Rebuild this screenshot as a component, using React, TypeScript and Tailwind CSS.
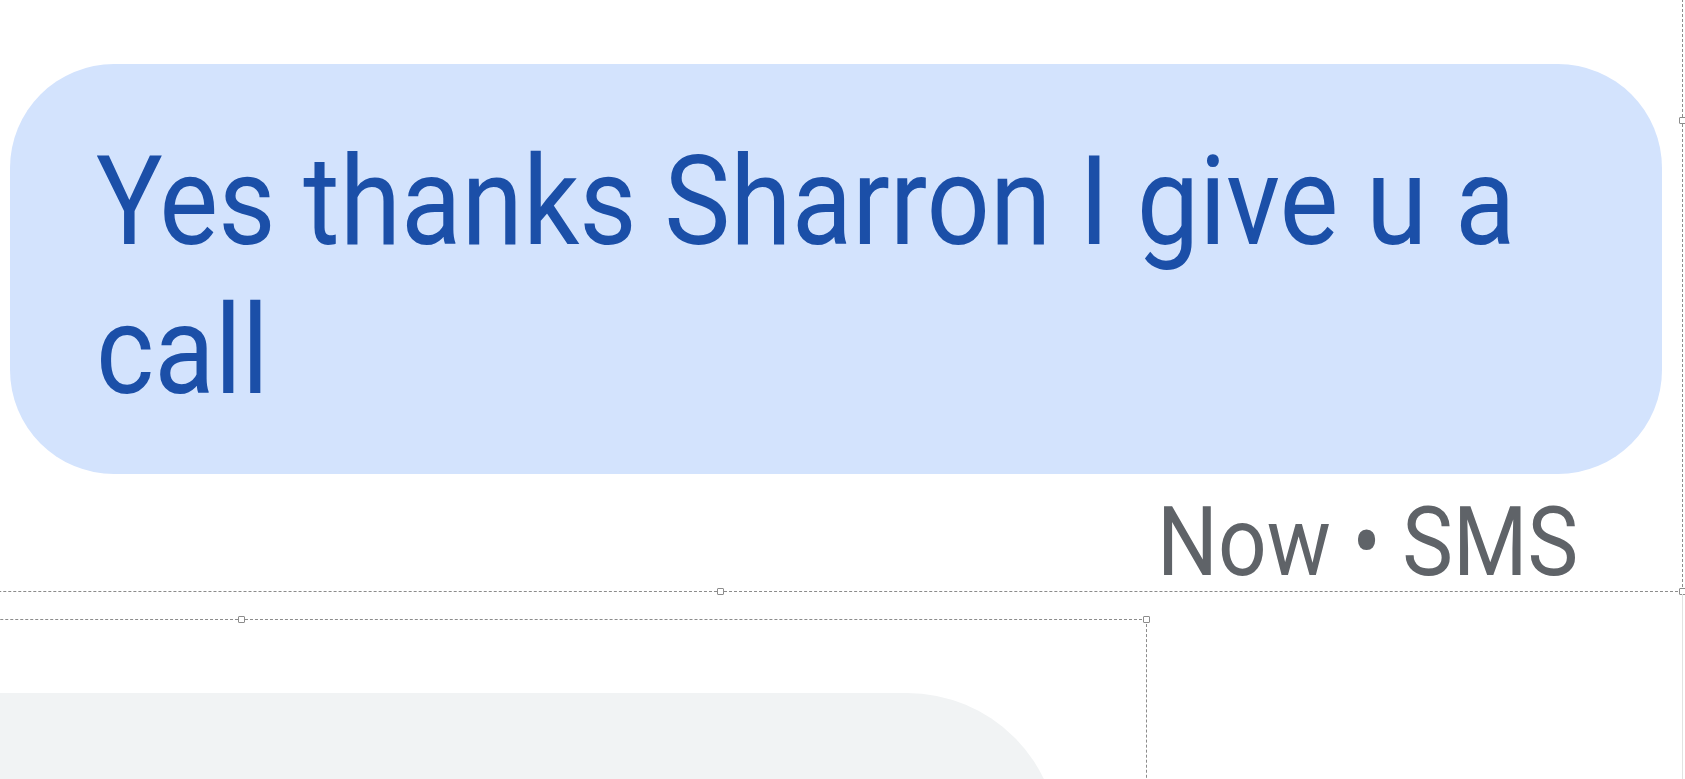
const font = { fontFamily: 'Roboto, "Noto Sans", sans-serif' };

function Handle({ className }: { className: string }) {
  return (
    <span
      className={`absolute h-[7px] w-[7px] rounded-[1px] border border-[#8c8c8c] bg-white ${className}`}
    />
  );
}

export default function App() {
  return (
    <div className="relative h-[779px] w-full overflow-hidden bg-white" style={font}>
      {/* message thread */}
      <div className="flex flex-col">
        <div className="ml-[10px] mt-[64px] h-[410px] w-[1652px] rounded-[104px] bg-[#d3e3fd] pl-[86px] pt-[63px]">
          <p className="w-[1610px] origin-left scale-x-[0.89] text-[125px] leading-[149px] text-[#1b4fa8]">
            Yes thanks Sharron I give u a call
          </p>
        </div>
        <div className="flex w-[1662px] justify-end pr-[84px] mt-[11px]">
          <span className="origin-right scale-x-[0.89] text-[96px] leading-[115px] text-[#5f6368]">
            Now • SMS
          </span>
        </div>
        <div className="mt-[93px] h-[200px] w-[1059px] rounded-tr-[152px] bg-[#f1f3f4]" />
      </div>

      {/* selection outlines */}
      <div className="absolute left-[-242px] top-[-351px] h-[943px] w-[1925px] border border-dashed border-[#8c8c8c]">
        <Handle className="bottom-[-4px] left-[958px]" />
        <Handle className="bottom-[-4px] right-[-4px]" />
        <Handle className="right-[-4px] top-[467px]" />
      </div>
      <div className="absolute right-[2px] top-[594px] h-[185px] w-px bg-[#e2e2e2]" />
      <div className="absolute left-[-664px] top-[619px] h-[400px] w-[1811px] border border-dashed border-[#8c8c8c]">
        <Handle className="left-[901px] top-[-4px]" />
        <Handle className="right-[-4px] top-[-4px]" />
      </div>
    </div>
  );
}
